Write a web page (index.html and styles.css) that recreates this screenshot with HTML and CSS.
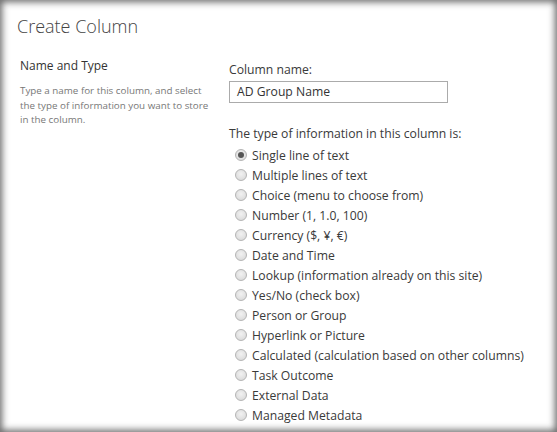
FILE: index.html
```html
<!DOCTYPE html>
<html>
<head>
<meta charset="utf-8">
<link rel="stylesheet" href="styles.css">
</head>
<body>
<div class="frame">
  <h1 class="title">Create Column</h1>
  <div class="section">
    <div class="left">
      <h2 class="sec-title">Name and Type</h2>
      <p class="desc">Type a name for this column, and select the type of information you want to store in the column.</p>
    </div>
    <div class="right">
      <div class="label">Column name:</div>
      <div class="input">AD Group Name</div>
      <div class="label type-label">The type of information in this column is:</div>
      <ul class="radios">
        <li><span class="radio checked"></span>Single line of text</li>
        <li><span class="radio"></span>Multiple lines of text</li>
        <li><span class="radio"></span>Choice (menu to choose from)</li>
        <li><span class="radio"></span>Number (1, 1.0, 100)</li>
        <li><span class="radio"></span>Currency ($, ¥, €)</li>
        <li><span class="radio"></span>Date and Time</li>
        <li><span class="radio"></span>Lookup (information already on this site)</li>
        <li><span class="radio"></span>Yes/No (check box)</li>
        <li><span class="radio"></span>Person or Group</li>
        <li><span class="radio"></span>Hyperlink or Picture</li>
        <li><span class="radio"></span>Calculated (calculation based on other columns)</li>
        <li><span class="radio"></span>Task Outcome</li>
        <li><span class="radio"></span>External Data</li>
        <li><span class="radio"></span>Managed Metadata</li>
      </ul>
    </div>
  </div>
</div>
</body>
</html>
```

FILE: styles.css
```css
html, body {
  margin: 0;
  padding: 0;
  width: 557px;
  height: 432px;
  overflow: hidden;
  background: #fff;
}
.frame {
  box-sizing: border-box;
  width: 557px;
  height: 432px;
  position: relative;
  overflow: hidden;
  font-family: "Open Sans", "Noto Sans", sans-serif;
  color: #444;
  padding: 14px 0 0 17px;
}
.frame::after {
  content: "";
  position: absolute;
  inset: 0;
  pointer-events: none;
  box-shadow: inset 0 0 7px 2px rgba(40,40,40,0.7);
}
.title {
  margin: 0;
  font-weight: 300;
  font-size: 18px;
  line-height: 24px;
  color: #444;
}
.section {
  display: flex;
  margin-top: 20px;
}
.left {
  width: 209px;
  padding-left: 3px;
  box-sizing: border-box;
  flex: none;
}
.sec-title {
  margin: 0;
  font-weight: 400;
  font-size: 12px;
  line-height: 16px;
  color: #333;
}
.desc {
  margin: 10px 0 0;
  font-size: 9.8px;
  line-height: 14.5px;
  color: #777;
  width: 193px;
}
.right {
  padding-top: 3px;
  padding-left: 3px;
}
.label {
  font-size: 12.2px;
  line-height: 17px;
  color: #3a3a3a;
}
.input {
  margin-top: 3px;
  width: 210px;
  height: 20px;
  border: 1px solid #ababab;
  padding-left: 7px;
  font-size: 12.2px;
  line-height: 20px;
  color: #333;
}
.type-label {
  margin-top: 22px;
}
.radios {
  list-style: none;
  margin: 3px 0 0;
  padding: 0 0 0 6px;
}
.radios li {
  display: flex;
  align-items: center;
  height: 20px;
  font-size: 12.2px;
  color: #3a3a3a;
}
.radio {
  box-sizing: border-box;
  width: 12px;
  height: 12px;
  border-radius: 50%;
  border: 1px solid #b4b4b4;
  background: radial-gradient(circle at 50% 40%, #f2f2f2 0%, #dedede 70%, #d2d2d2 100%);
  margin-right: 5px;
  flex: none;
  display: flex;
  align-items: center;
  justify-content: center;
}
.radio.checked::after {
  content: "";
  width: 6px;
  height: 6px;
  border-radius: 50%;
  background: #555;
}
```
